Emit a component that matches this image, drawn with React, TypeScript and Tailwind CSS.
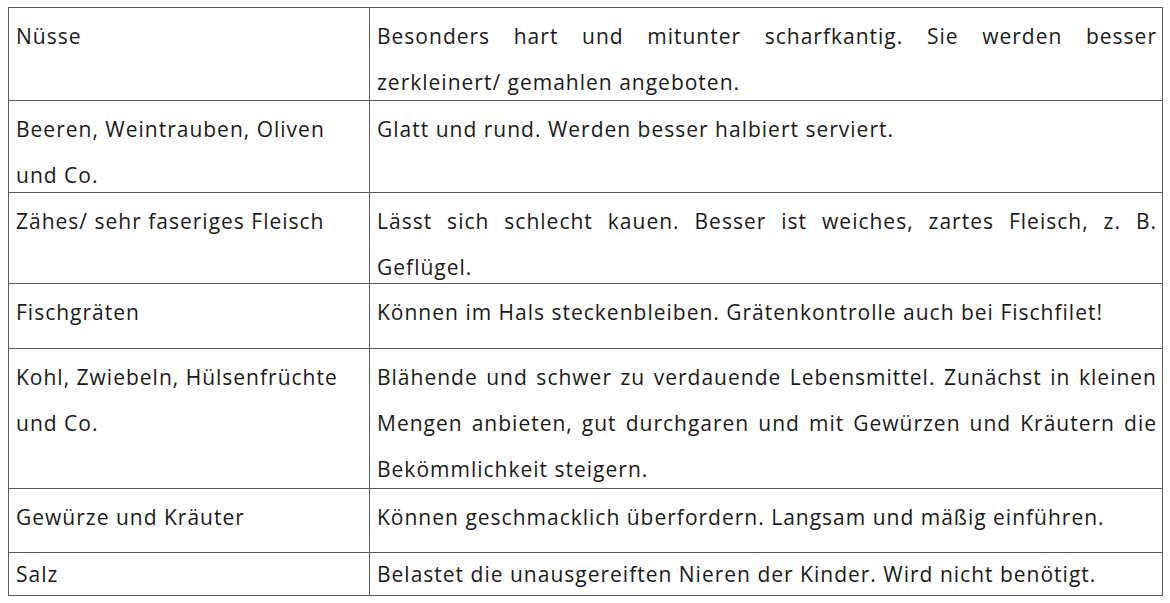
const rows: { left: string[]; right: string[]; h: string; last?: boolean }[] = [
  {
    left: ['Nüsse'],
    right: ['Besonders hart und mitunter scharfkantig. Sie werden besser', 'zerkleinert/ gemahlen angeboten.'],
    h: 'h-[92px]',
  },
  {
    left: ['Beeren, Weintrauben, Oliven', 'und Co.'],
    right: ['Glatt und rund. Werden besser halbiert serviert.'],
    h: 'h-[92px]',
  },
  {
    left: ['Zähes/ sehr faseriges Fleisch'],
    right: ['Lässt sich schlecht kauen. Besser ist weiches, zartes Fleisch, z. B.', 'Geflügel.'],
    h: 'h-[91px]',
  },
  {
    left: ['Fischgräten'],
    right: ['Können im Hals steckenbleiben. Grätenkontrolle auch bei Fischfilet!'],
    h: 'h-[65px]',
  },
  {
    left: ['Kohl, Zwiebeln, Hülsenfrüchte', 'und Co.'],
    right: [
      'Blähende und schwer zu verdauende Lebensmittel. Zunächst in kleinen',
      'Mengen anbieten, gut durchgaren und mit Gewürzen und Kräutern die',
      'Bekömmlichkeit steigern.',
    ],
    h: 'h-[140px]',
  },
  {
    left: ['Gewürze und Kräuter'],
    right: ['Können geschmacklich überfordern. Langsam und mäßig einführen.'],
    h: 'h-[64px]',
  },
  {
    left: ['Salz'],
    right: ['Belastet die unausgereiften Nieren der Kinder. Wird nicht benötigt.'],
    h: 'h-[43px]',
    last: true,
  },
]

function Lines({ lines, last, justify }: { lines: string[]; last?: boolean; justify?: boolean }) {
  return (
    <div className={last ? 'pt-[5px] leading-[32px]' : 'pt-[5px] leading-[46px]'}>
      {lines.map((l, i) => (
        <div
          key={i}
          className={justify && i < lines.length - 1 ? 'whitespace-nowrap text-justify [text-align-last:justify]' : 'whitespace-nowrap'}
        >
          {l}
        </div>
      ))}
    </div>
  )
}

export default function App() {
  return (
    <div className="w-[1170px] h-[603px] bg-white pt-[7px] pl-[8px] font-['Open_Sans','Liberation_Sans',sans-serif] text-[21px] tracking-[1px] text-[#1a1a1a] overflow-hidden">
      <div className="w-[1155px] border border-[#5c5c5c]">
        {rows.map((r, i) => (
          <div key={i} className={`flex ${r.h} ${i > 0 ? 'border-t border-[#5c5c5c]' : ''}`}>
            <div className="w-[361px] shrink-0 border-r border-[#5c5c5c] pl-[7px] pr-[6px] overflow-hidden">
              <Lines lines={r.left} last={r.last} />
            </div>
            <div className="flex-1 pl-[7px] pr-[5px] overflow-hidden">
              <Lines lines={r.right} last={r.last} justify />
            </div>
          </div>
        ))}
      </div>
    </div>
  )
}
